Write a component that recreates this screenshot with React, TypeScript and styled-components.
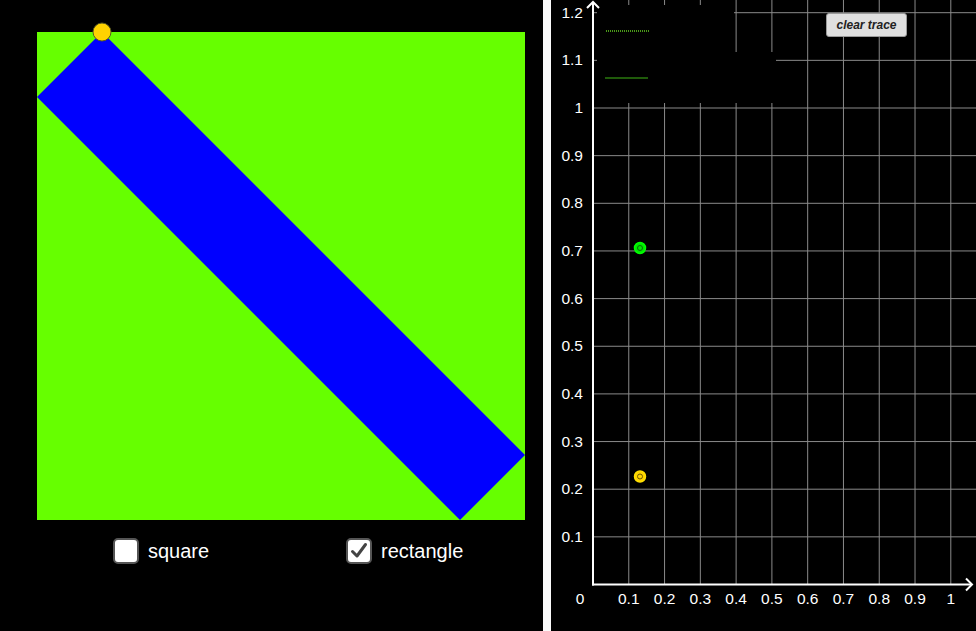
import React from 'react'
import styled, { createGlobalStyle } from 'styled-components'

const GlobalStyle = createGlobalStyle`
  html, body {
    margin: 0;
    padding: 0;
    background: #000;
    font-family: "Liberation Sans", Arial, sans-serif;
  }
`

// graph geometry (right panel local coords)
const OX = 42
const OY = 584.5
const UX = 357.8
const UY = 476.5
const PANEL_W = 425
const PANEL_H = 631

const px = (v: number) => OX + v * UX
const py = (v: number) => OY - v * UY

const xTicks = [0.1, 0.2, 0.3, 0.4, 0.5, 0.6, 0.7, 0.8, 0.9, 1]
const yTicks = [0.1, 0.2, 0.3, 0.4, 0.5, 0.6, 0.7, 0.8, 0.9, 1, 1.1, 1.2]

const fmt = (v: number) => String(Math.round(v * 10) / 10)

const App = () => {
  return (
    <>
      <GlobalStyle />
      <Page>
        <LeftPanel>
          <Canvas viewBox="0 0 488 488" width={488} height={488}>
            <rect x={0} y={0} width={488} height={488} fill="#66ff00" />
            <polygon points="65,0 0,65 423,488 488,423" fill="#0000ff" />
            <circle cx={65} cy={0} r={9} fill="#ffd200" stroke="#5a5a20" strokeWidth={1} />
          </Canvas>
          <Options>
            <Option>
              <Box />
              <Label>square</Label>
            </Option>
            <Option>
              <Box>
                <svg width="20" height="20" viewBox="0 0 20 20">
                  <path d="M3.5 10.5 L8 15 L16.5 3.5" fill="none" stroke="#444" strokeWidth={3} strokeLinecap="round" strokeLinejoin="round" />
                </svg>
              </Box>
              <Label>rectangle</Label>
            </Option>
          </Options>
        </LeftPanel>
        <Divider />
        <RightPanel>
          <svg width={PANEL_W} height={PANEL_H} viewBox={`0 0 ${PANEL_W} ${PANEL_H}`}>
            {xTicks.map((v) => (
              <line key={'vx' + v} x1={px(v)} x2={px(v)} y1={0} y2={OY} stroke="#8a8a8a" strokeWidth={1} />
            ))}
            {yTicks.map((v) => (
              <line key={'hy' + v} x1={OX} x2={PANEL_W} y1={py(v)} y2={py(v)} stroke="#8a8a8a" strokeWidth={1} />
            ))}

            {/* legend backdrop */}
            <rect x={46} y={5} width={137} height={48} fill="#000" />
            <rect x={46} y={52} width={179} height={51} fill="#000" />
            <line x1={55} x2={98} y1={31} y2={31} stroke="#4a9a18" strokeWidth={2} strokeDasharray="1 1" />
            <line x1={54} x2={97} y1={78} y2={78} stroke="#1f5a0a" strokeWidth={2} />

            {/* axes */}
            <line x1={OX} x2={OX} y1={OY + 1} y2={2} stroke="#fff" strokeWidth={2} />
            <polyline points={`${OX - 6},8 ${OX},2 ${OX + 6},8`} fill="none" stroke="#fff" strokeWidth={2} />
            <line x1={OX - 1} x2={PANEL_W - 4} y1={OY} y2={OY} stroke="#fff" strokeWidth={2} />
            <polyline points={`${PANEL_W - 10},${OY - 6} ${PANEL_W - 4},${OY} ${PANEL_W - 10},${OY + 6}`} fill="none" stroke="#fff" strokeWidth={2} />

            {yTicks.map((v) => (
              <TickText key={'ly' + v} x={OX - 10} y={py(v) + 5} textAnchor="end">
                {fmt(v)}
              </TickText>
            ))}
            <TickText x={OX - 13} y={OY + 19} textAnchor="middle">0</TickText>
            {xTicks.map((v) => (
              <TickText key={'lx' + v} x={px(v)} y={OY + 19} textAnchor="middle">
                {fmt(v)}
              </TickText>
            ))}

            {/* traced points */}
            <circle cx={89} cy={248} r={5.5} fill="#00e600" stroke="#00ff00" strokeWidth={1.5} />
            <circle cx={89} cy={248} r={2.5} fill="none" stroke="#0a6a0a" strokeWidth={1} />
            <circle cx={89} cy={476.5} r={5.5} fill="#ffd200" stroke="#ffe000" strokeWidth={1.5} />
            <circle cx={89} cy={476.5} r={2.5} fill="none" stroke="#6a5a00" strokeWidth={1} />
          </svg>
          <ClearButton>clear trace</ClearButton>
        </RightPanel>
      </Page>
    </>
  )
}

export default App

const Page = styled.div`
  display: flex;
  width: 976px;
  height: 631px;
  background: #000;
  overflow: hidden;
`

const LeftPanel = styled.div`
  width: 543px;
  padding: 32px 0 0 37px;
  box-sizing: border-box;
  display: flex;
  flex-direction: column;
`

const Canvas = styled.svg`
  display: block;
  overflow: visible;
`

const Options = styled.div`
  display: grid;
  grid-template-columns: 233px auto;
  margin: 18px 0 0 76px;
`

const Option = styled.div`
  display: flex;
  align-items: center;
  gap: 9px;
`

const Box = styled.div`
  width: 22px;
  height: 22px;
  background: #fff;
  border: 2px solid #555;
  border-radius: 5px;
  display: flex;
  align-items: center;
  justify-content: center;
`

const Label = styled.span`
  color: #fff;
  font-size: 20px;
`

const Divider = styled.div`
  width: 8px;
  background: #fafafa;
`

const RightPanel = styled.div`
  position: relative;
  flex: 1;
  svg {
    display: block;
  }
`

const TickText = styled.text`
  fill: #fff;
  font-family: "Liberation Sans", Arial, sans-serif;
  font-size: 15.5px;
`

const ClearButton = styled.button`
  position: absolute;
  left: 275px;
  top: 13px;
  width: 81px;
  height: 24px;
  padding: 0;
  background: #e0e0e0;
  border: 1px solid #9a9a9a;
  border-radius: 3px;
  font-family: "Liberation Sans", Arial, sans-serif;
  font-size: 12px;
  font-weight: bold;
  font-style: italic;
  color: #222;
`
